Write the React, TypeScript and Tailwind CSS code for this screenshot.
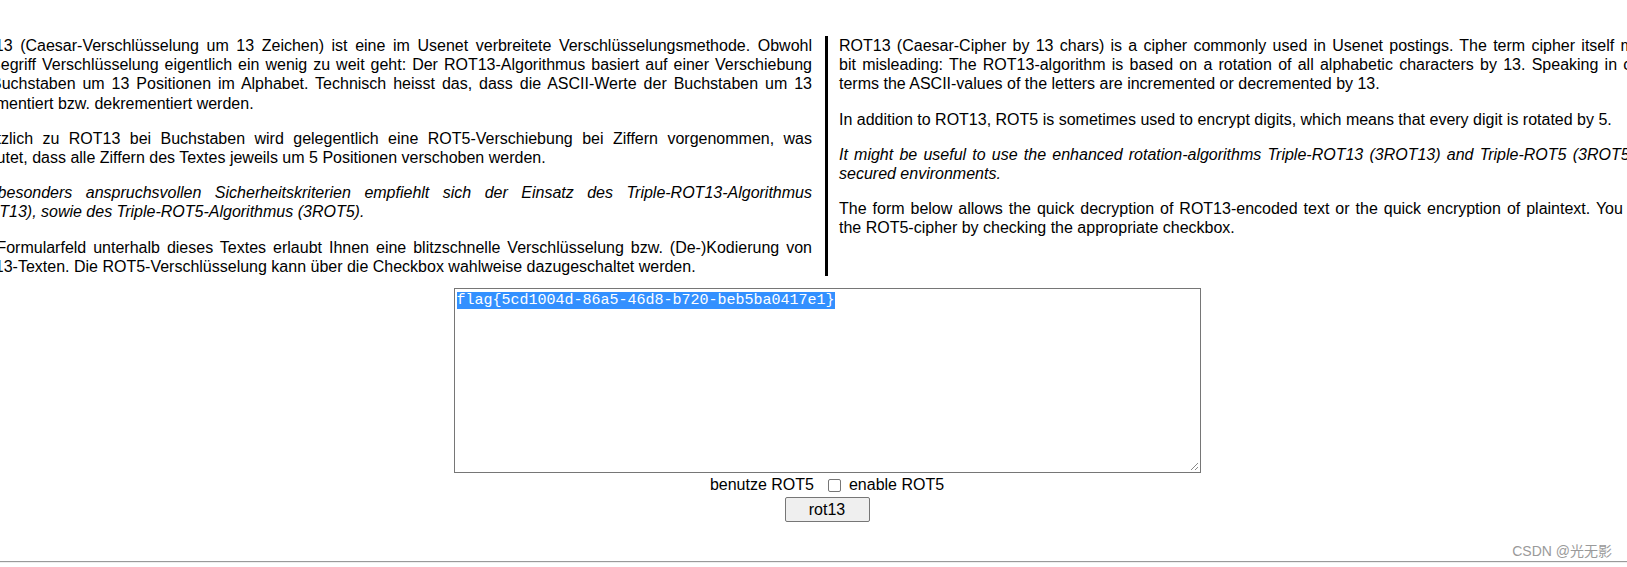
type Para = { lines: string[]; italic?: boolean };

const german: Para[] = [
  {
    lines: [
      "ROT13 (Caesar-Verschlüsselung um 13 Zeichen) ist eine im Usenet verbreitete Verschlüsselungsmethode. Obwohl",
      "der Begriff Verschlüsselung eigentlich ein wenig zu weit geht: Der ROT13-Algorithmus basiert auf einer Verschiebung",
      "der Buchstaben um 13 Positionen im Alphabet. Technisch heisst das, dass die ASCII-Werte der Buchstaben um 13",
      "inkrementiert bzw. dekrementiert werden.",
    ],
  },
  {
    lines: [
      "Zusätzlich zu ROT13 bei Buchstaben wird gelegentlich eine ROT5-Verschiebung bei Ziffern vorgenommen, was",
      "bedeutet, dass alle Ziffern des Textes jeweils um 5 Positionen verschoben werden.",
    ],
  },
  {
    italic: true,
    lines: [
      "Bei besonders anspruchsvollen Sicherheitskriterien empfiehlt sich der Einsatz des Triple-ROT13-Algorithmus",
      "(3ROT13), sowie des Triple-ROT5-Algorithmus (3ROT5).",
    ],
  },
  {
    lines: [
      "Das Formularfeld unterhalb dieses Textes erlaubt Ihnen eine blitzschnelle Verschlüsselung bzw. (De-)Kodierung von",
      "ROT13-Texten. Die ROT5-Verschlüsselung kann über die Checkbox wahlweise dazugeschaltet werden.",
    ],
  },
];

const english: Para[] = [
  {
    lines: [
      "ROT13 (Caesar-Cipher by 13 chars) is a cipher commonly used in Usenet postings. The term cipher itself may be a",
      "bit misleading: The ROT13-algorithm is based on a rotation of all alphabetic characters by 13. Speaking in computer",
      "terms the ASCII-values of the letters are incremented or decremented by 13.",
    ],
  },
  {
    lines: [
      "In addition to ROT13, ROT5 is sometimes used to encrypt digits, which means that every digit is rotated by 5.",
    ],
  },
  {
    italic: true,
    lines: [
      "It might be useful to use the enhanced rotation-algorithms Triple-ROT13 (3ROT13) and Triple-ROT5 (3ROT5) in high",
      "secured environments.",
    ],
  },
  {
    lines: [
      "The form below allows the quick decryption of ROT13-encoded text or the quick encryption of plaintext. You can also",
      "the ROT5-cipher by checking the appropriate checkbox.",
    ],
  },
];

// justified lines, broken where the original page breaks them
function Paragraph({ para }: { para: Para }) {
  return (
    <p className={para.italic ? "italic" : ""}>
      {para.lines.map((line, i) =>
        i < para.lines.length - 1 ? (
          <span key={i} className="block text-justify [text-align-last:justify]">
            {line}
          </span>
        ) : (
          <span key={i} className="block">
            {line}
          </span>
        ),
      )}
    </p>
  );
}

export default function App() {
  return (
    <div className="relative h-[567px] w-full overflow-hidden bg-white font-['Liberation_Sans',Arial,sans-serif] text-[16px] leading-[19.2px] text-black">
      <div className="-ml-[51px] w-[1753px] pt-9">
        <div className="flex items-start">
          <div className="w-[879px] shrink-0 space-y-4 border-r-[3px] border-black pr-[13px] pl-3">
            {german.map((p, i) => (
              <Paragraph key={i} para={p} />
            ))}
          </div>
          <div className="w-[874px] shrink-0 space-y-4 pr-3 pl-[11px]">
            {english.map((p, i) => (
              <Paragraph key={i} para={p} />
            ))}
          </div>
        </div>

        <div className="mt-3 flex flex-col items-center pl-[3px]">
          <div className="relative h-[185px] w-[747px] border border-[#767676] bg-white px-[2px] pt-[4px] font-['Liberation_Mono','Courier_New',monospace] text-[15px] leading-[16px]">
            <span className="bg-[#3390ff] text-white">flag{"{"}5cd1004d-86a5-46d8-b720-beb5ba0417e1{"}"}</span>
            <svg
              className="absolute right-[1px] bottom-[1px]"
              width="10"
              height="10"
              viewBox="0 0 10 10"
            >
              <path d="M9 2 L2 9 M9 6 L6 9" stroke="#8a8a8a" strokeWidth="1" fill="none" />
            </svg>
          </div>
          <div className="flex h-6 items-center">
            <span>benutze ROT5</span>
            <input
              type="checkbox"
              className="mr-[8px] ml-[14px] size-[13px] appearance-none rounded-[2px] border border-[#767676] bg-white"
            />
            <span>enable ROT5</span>
          </div>
          <button className="h-[25px] w-[85px] rounded-[2px] border border-[#767676] bg-[#efefef] text-[16px] leading-none text-black">
            rot13
          </button>
        </div>
      </div>

      <hr className="mt-[39px] border-0 border-t border-b border-t-[#9a9a9a] border-b-[#eeeeee]" />

      <div className="absolute top-[543px] right-[15px] font-['Liberation_Sans','Noto_Sans_CJK_SC',sans-serif] text-[14px] leading-4 text-[#9a9a9a]">
        CSDN @光无影
      </div>
    </div>
  );
}
